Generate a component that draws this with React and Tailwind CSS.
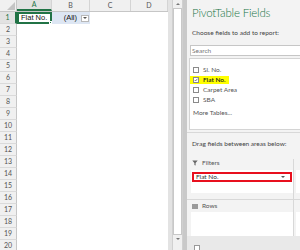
import React from "react";

const cols = [
  { name: "A", w: "w-[35px]" },
  { name: "B", w: "w-[38px]" },
  { name: "C", w: "w-[41px]" },
  { name: "D", w: "w-[37px]" },
];

const rows = Array.from({ length: 20 }, (_, i) => i + 1);

const fields = [
  { label: "Sl. No.", checked: false },
  { label: "Flat No.", checked: true },
  { label: "Carpet Area", checked: false },
  { label: "SBA", checked: false },
];

function Checkbox({ checked }) {
  return (
    <span className="w-[6px] h-[6px] border border-[#8a8a8a] bg-white flex items-center justify-center shrink-0">
      {checked && (
        <svg width="6" height="6" viewBox="0 0 6 6">
          <path d="M1 3 L2.5 4.5 L5 1.2" fill="none" stroke="#333" strokeWidth="0.9" />
        </svg>
      )}
    </span>
  );
}

function Sheet() {
  return (
    <div className="w-[168px] h-full flex flex-col bg-white">
      <div className="flex h-[12px] shrink-0 bg-[#f0f0f0] border-b border-[#c6c6c6]">
        <div className="w-[17px] shrink-0 border-r border-[#c6c6c6] relative">
          <div className="absolute right-[1px] bottom-[1px] w-0 h-0 border-l-[8px] border-l-transparent border-b-[8px] border-b-[#c4c4c4]" />
        </div>
        {cols.map((c) => (
          <div
            key={c.name}
            className={`${c.w} shrink-0 border-r border-[#d4d4d4] flex items-center justify-center text-[7px] ${
              c.name === "A" ? "text-[#217346] bg-[#e2e2e2] border-b-2 border-b-[#217346]" : "text-[#555]"
            }`}
          >
            {c.name}
          </div>
        ))}
      </div>
      {rows.map((r) => (
        <div key={r} className="flex h-[12px] shrink-0">
          <div
            className={`w-[17px] shrink-0 border-r border-b border-b-[#dadada] flex items-center justify-center text-[7px] ${
              r === 1 ? "bg-[#e2e2e2] text-[#217346] border-r-2 border-r-[#217346]" : "bg-[#f0f0f0] text-[#555] border-r-[#c6c6c6]"
            }`}
          >
            {r}
          </div>
          {r === 1 ? (
            <>
              <div className="w-[35px] shrink-0 border-2 border-[#217346] relative flex items-center pl-[2px] text-[7.5px] text-[#111] leading-none whitespace-nowrap" style={{ fontFamily: "'Liberation Sans', sans-serif" }}>
                Flat No.
                <span className="absolute -right-[2px] -bottom-[2px] w-[3px] h-[3px] bg-[#217346] border border-white" />
              </div>
              <div className="w-[38px] shrink-0 bg-[#dde6f3] flex items-center justify-end gap-[4px] pr-[1px] text-[7.5px] text-[#111] leading-none" style={{ fontFamily: "'Liberation Sans', sans-serif" }}>
                (All)
                <span className="w-[8px] h-[7px] bg-white border border-[#b8b8b8] flex items-center justify-center">
                  <span className="w-0 h-0 border-l-[2px] border-l-transparent border-r-[2px] border-r-transparent border-t-[2px] border-t-[#555]" />
                </span>
              </div>
            </>
          ) : null}
        </div>
      ))}
    </div>
  );
}

function Scrollbar() {
  return (
    <div className="w-[15px] h-full flex shrink-0">
      <div className="w-[4px] bg-[#e3e3e3]" />
      <div className="w-[11px] bg-[#f0f0f0] flex flex-col items-center border-x border-[#d0d0d0]">
        <span className="mt-[3px] w-0 h-0 border-l-[2px] border-l-transparent border-r-[2px] border-r-transparent border-b-[2px] border-b-[#777]" />
        <div className="mt-[3px] w-[9px] h-[227px] bg-white border border-[#c8c8c8]" />
        <span className="mt-[3px] w-0 h-0 border-l-[2px] border-l-transparent border-r-[2px] border-r-transparent border-t-[2px] border-t-[#777]" />
      </div>
    </div>
  );
}

function Panel() {
  return (
    <div className="flex-1 h-full flex bg-[#f3f3f3] overflow-hidden">
      <div className="w-[4px] bg-[#c9c9c9] shrink-0" />
      <div className="flex-1 flex flex-col">
        <div className="pl-[5px] pt-[4px] h-[20px] text-[11.5px] leading-[18px] text-[#217346] font-light whitespace-nowrap tracking-[-0.2px]" style={{ fontFamily: "'Segoe UI', Lato, 'Open Sans', sans-serif" }}>
          PivotTable Fields
        </div>
        <div className="pl-[5px] mt-[9px] text-[6.5px] leading-[8px] text-[#444] whitespace-nowrap">
          Choose fields to add to report:
        </div>
        <div className="ml-[3px] mt-[8px] h-[11px] w-[130px] bg-white border border-[#c6c6c6] flex items-center pl-[1px] text-[6.5px] text-[#777]">
          Search
        </div>
        <div className="ml-[2px] mt-[2px] h-[72px] w-[130px] bg-white border border-[#d4d4d4] flex flex-col pt-[6px]">
          {fields.map((f) => (
            <div key={f.label} className="h-[10px] flex items-center">
              <div
                className={`flex items-center gap-[4px] pl-[3px] pr-[3px] h-[8px] ${
                  f.checked ? "bg-[#ffff00] font-semibold text-[#222]" : "text-[#555]"
                }`}
              >
                <Checkbox checked={f.checked} />
                <span className="text-[6.5px] leading-none whitespace-nowrap">{f.label}</span>
              </div>
            </div>
          ))}
          <div className="pl-[3px] mt-[5px] text-[6.5px] leading-none text-[#555] whitespace-nowrap">More Tables...</div>
        </div>
        <div className="mt-[2px] h-px bg-[#d8d8d8] w-[130px]" />
        <div className="pl-[5px] mt-[7px] text-[6.5px] leading-[8px] text-[#444] whitespace-nowrap">
          Drag fields between areas below:
        </div>
        <div className="mt-[11px] flex">
          <div className="w-[106px] shrink-0 flex flex-col">
            <div className="h-[8px] flex items-center gap-[4px] pl-[5px] text-[6.5px] text-[#555]">
              <svg width="6" height="6" viewBox="0 0 6 6">
                <path d="M0.3 0.5 H5.7 L3.6 3 V5.6 L2.4 5 V3 Z" fill="#666" />
              </svg>
              Filters
            </div>
            <div className="mt-[3px] ml-[4px] w-[102px] h-[23px] bg-white pt-[2px] pl-[1px]">
              <div className="h-[10px] w-[100px] border-2 border-[#e8101e] flex items-center justify-between pl-[2px] pr-[5px] text-[6.5px] text-[#333]">
                Flat No.
                <span className="w-0 h-0 border-l-[2px] border-l-transparent border-r-[2px] border-r-transparent border-t-[2px] border-t-[#555]" />
              </div>
            </div>
            <div className="mt-[6px] h-px bg-[#d8d8d8]" />
            <div className="mt-[2px] h-[8px] flex items-center gap-[4px] pl-[5px] text-[6.5px] text-[#555]">
              <span className="w-[6px] h-[5px] bg-[#9a9a9a]" />
              Rows
            </div>
            <div className="mt-[2px] ml-[4px] w-[102px] h-[24px] bg-white" />
          </div>
          <div className="w-px bg-[#d8d8d8] shrink-0" />
          <div className="flex-1 flex flex-col">
            <div className="h-[8px]" />
            <div className="mt-[3px] ml-[2px] h-[23px] bg-white" />
            <div className="mt-[6px] h-px bg-[#d8d8d8]" />
            <div className="mt-[12px] ml-[2px] h-[24px] bg-white" />
          </div>
        </div>
        <div className="flex-1 bg-[#e9e9e9] relative">
          <span className="absolute left-[7px] top-[9px] w-[6px] h-[6px] border border-[#999] bg-white" />
        </div>
      </div>
    </div>
  );
}

export default function App() {
  return (
    <div className="w-[300px] h-[250px] overflow-hidden flex bg-white" style={{ fontFamily: "Lato, 'Open Sans', sans-serif" }}>
      <Sheet />
      <Scrollbar />
      <Panel />
    </div>
  );
}
